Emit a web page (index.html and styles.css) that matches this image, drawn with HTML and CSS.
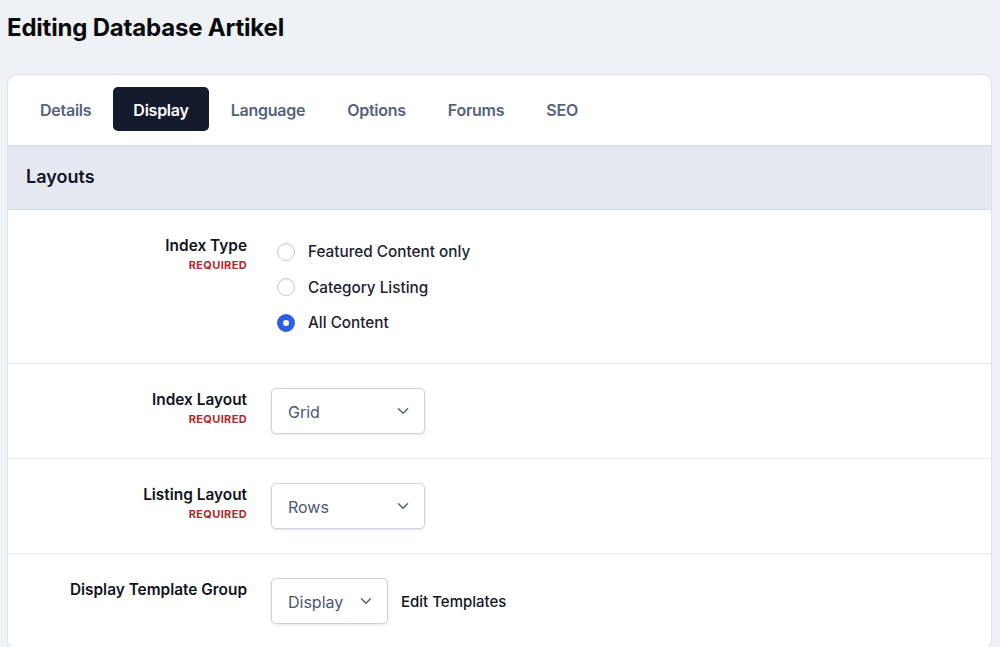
FILE: index.html
```html
<!DOCTYPE html>
<html lang="en">
<head>
    <meta charset="UTF-8" />
    <meta name="viewport" content="width=device-width, initial-scale=1" />
    <title>Editing Database Artikel</title>
    <link rel="stylesheet" href="styles.css">
</head>
<body>
    <h1 class="page_title">Editing Database Artikel</h1>

    <div class="panel">
        <nav class="tabs">
            <a href="#" class="tab">Details</a>
            <a href="#" class="tab active">Display</a>
            <a href="#" class="tab">Language</a>
            <a href="#" class="tab">Options</a>
            <a href="#" class="tab">Forums</a>
            <a href="#" class="tab">SEO</a>
        </nav>

        <div class="section_head">Layouts</div>

        <div class="field">
            <div class="field_label">
                <span class="label_text">Index Type</span>
                <span class="required">Required</span>
            </div>
            <div class="radios">
                <label class="radio"><span class="dot"></span>Featured Content only</label>
                <label class="radio"><span class="dot"></span>Category Listing</label>
                <label class="radio"><span class="dot checked"></span>All Content</label>
            </div>
        </div>

        <div class="field">
            <div class="field_label">
                <span class="label_text">Index Layout</span>
                <span class="required">Required</span>
            </div>
            <div class="select wide">
                <span>Grid</span>
                <svg class="chevron" width="12" height="8" viewBox="0 0 12 8"><path d="M1.5 1.75 6 6.25l4.5-4.5" fill="none" stroke="#5d677a" stroke-width="1.6" stroke-linecap="round" stroke-linejoin="round"/></svg>
            </div>
        </div>

        <div class="field">
            <div class="field_label">
                <span class="label_text">Listing Layout</span>
                <span class="required">Required</span>
            </div>
            <div class="select wide">
                <span>Rows</span>
                <svg class="chevron" width="12" height="8" viewBox="0 0 12 8"><path d="M1.5 1.75 6 6.25l4.5-4.5" fill="none" stroke="#5d677a" stroke-width="1.6" stroke-linecap="round" stroke-linejoin="round"/></svg>
            </div>
        </div>

        <div class="field">
            <div class="field_label">
                <span class="label_text">Display Template Group</span>
            </div>
            <div class="inline_controls">
                <div class="select">
                    <span>Display</span>
                    <svg class="chevron" width="12" height="8" viewBox="0 0 12 8"><path d="M1.5 1.75 6 6.25l4.5-4.5" fill="none" stroke="#5d677a" stroke-width="1.6" stroke-linecap="round" stroke-linejoin="round"/></svg>
                </div>
                <a href="#" class="plain_link">Edit Templates</a>
            </div>
        </div>
    </div>
</body>
</html>
```

FILE: styles.css
```css
body, html {
    margin: 0;
    padding: 0;
    font-family: Inter, "Noto Sans", Arial, sans-serif;
    background-color: #eef1f6;
    color: #111827;
}
body {
    padding: 0 8px 0 7px;
}
.page_title {
    margin: 13px 0 0;
    height: 61px;
    line-height: 30px;
    font-size: 24px;
    font-weight: 700;
    color: #0a0a0a;
    letter-spacing: -0.2px;
}
.panel {
    background: white;
    border: 1px solid #dde1e9;
    border-radius: 10px;
    overflow: hidden;
}
.tabs {
    display: flex;
    gap: 2px;
    padding: 12px 12px 14px;
}
.tab {
    display: flex;
    align-items: center;
    height: 44px;
    padding: 1px 20px 0;
    box-sizing: border-box;
    border-radius: 5px;
    font-size: 16px;
    font-weight: 600;
    letter-spacing: -0.25px;
    color: #56637c;
    text-decoration: none;
}
.tab.active {
    background-color: #131b2d;
    color: white;
}
.section_head {
    background-color: #e6e9f1;
    border-top: 1px solid #d6dbe4;
    border-bottom: 1px solid #d6dbe4;
    height: 63px;
    line-height: 61px;
    padding: 0 18px;
    font-size: 18px;
    font-weight: 600;
    color: #0f1523;
}
.field {
    display: flex;
    gap: 24px;
    padding: 24px 20px;
    border-bottom: 1px solid #e8ebf0;
}
.field_label {
    width: 219px;
    flex-shrink: 0;
    display: flex;
    flex-direction: column;
    align-items: flex-end;
    text-align: right;
}
.label_text {
    font-size: 15.4px;
    font-weight: 600;
    line-height: 24px;
    color: #10141d;
}
.required {
    font-size: 11px;
    font-weight: 700;
    line-height: 15px;
    text-transform: uppercase;
    letter-spacing: 0.35px;
    color: #b02a2a;
}
.radios {
    display: flex;
    flex-direction: column;
    padding-left: 6px;
    margin-bottom: -1.5px;
}
.radio {
    display: flex;
    align-items: center;
    gap: 13px;
    height: 35.5px;
    font-size: 15.3px;
    font-weight: 500;
    color: #1b2230;
}
.dot {
    width: 18px;
    height: 18px;
    border-radius: 50%;
    box-sizing: border-box;
    border: 1px solid #c5cad3;
    box-shadow: inset 0 1px 2px rgb(0 0 0 / 0.08);
    background: white;
}
.dot.checked {
    border: 6px solid #2d5fe2;
    box-shadow: none;
}
.select {
    display: flex;
    align-items: center;
    justify-content: space-between;
    box-sizing: border-box;
    height: 46px;
    width: 117px;
    padding: 0 16px;
    border: 1px solid #cdd3dd;
    border-radius: 5px;
    box-shadow: 0 1px 3px rgb(0 0 0 / 0.1);
    font-size: 16px;
    color: #4b5771;
    background: white;
}
.select.wide {
    width: 154px;
}
.select span {
    padding-top: 2px;
}
.chevron {
    margin-right: -1px;
}
.inline_controls {
    display: flex;
    align-items: center;
    gap: 13px;
}
.plain_link {
    font-size: 15px;
    color: #10141d;
    text-decoration: none;
    font-weight: 500;
}
```
